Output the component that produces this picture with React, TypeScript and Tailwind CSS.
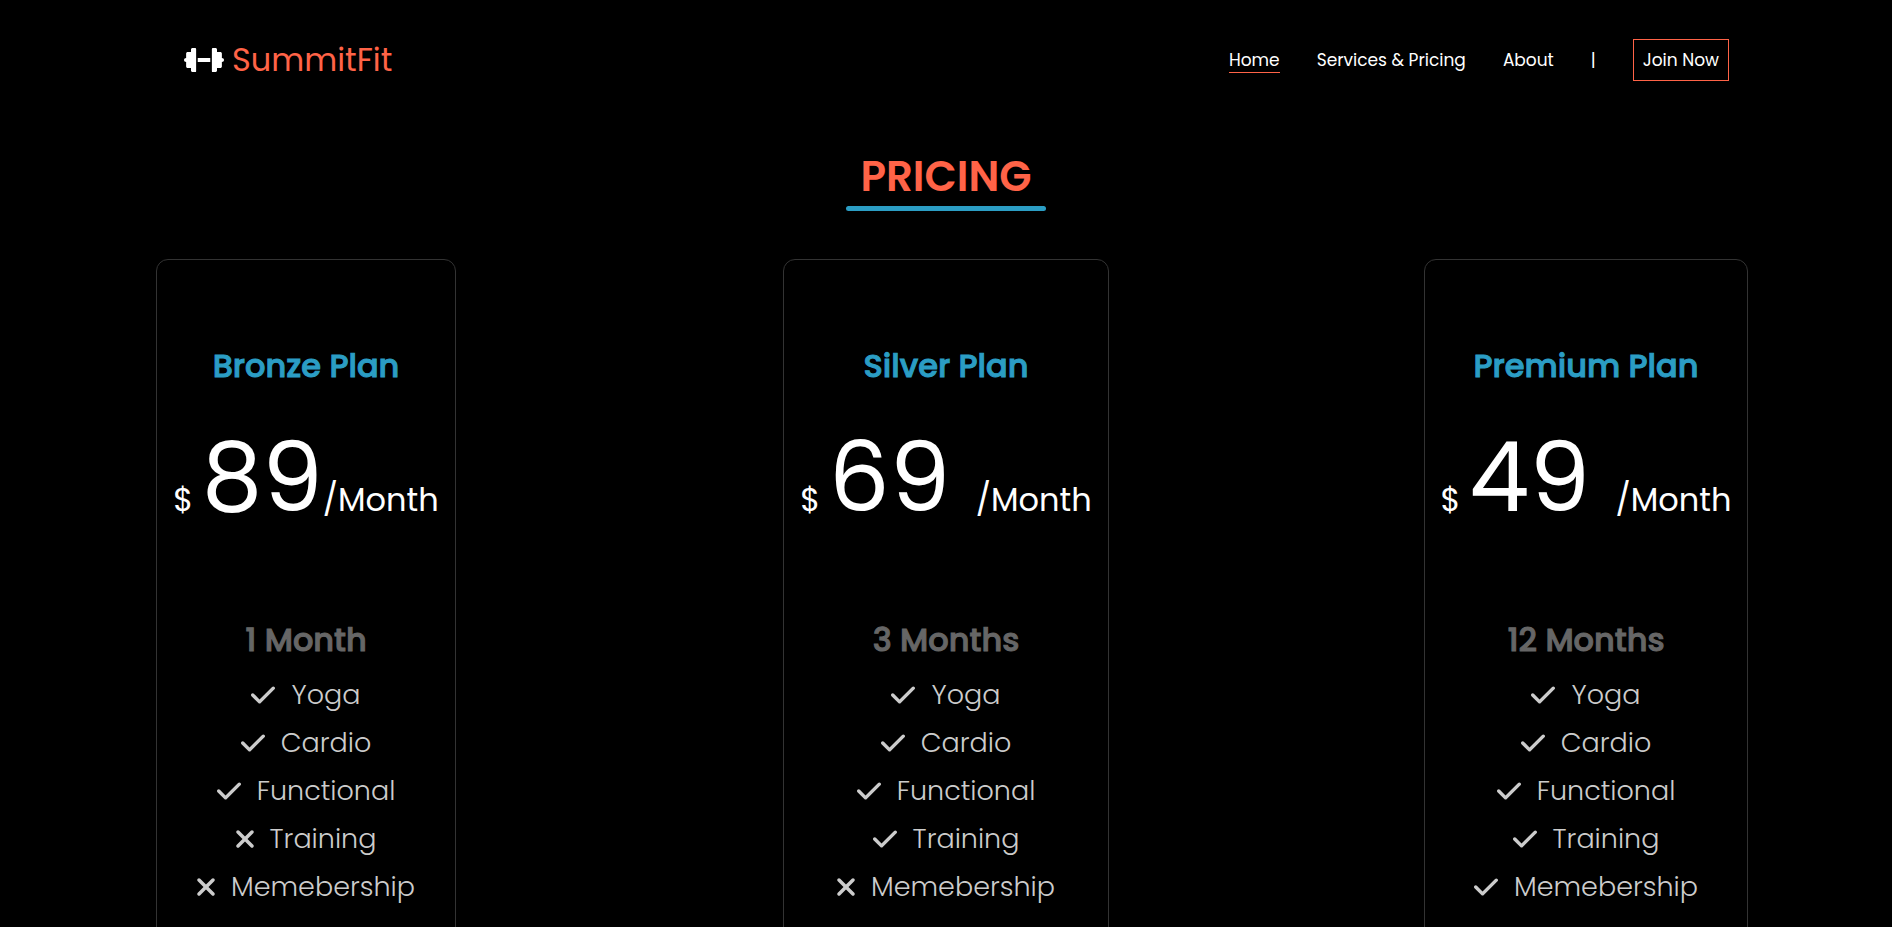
type Feature = { name: string; included: boolean };
type Plan = {
  name: string;
  price: string;
  duration: string;
  features: Feature[];
};

const featureNames = ["Yoga", "Cardio", "Functional", "Training", "Memebership"];

const featuresUpTo = (count: number): Feature[] =>
  featureNames.map((name, index) => ({ name, included: index < count }));

const plans: Plan[] = [
  { name: "Bronze Plan", price: "89", duration: "1 Month", features: featuresUpTo(3) },
  { name: "Silver Plan", price: "69 ", duration: "3 Months", features: featuresUpTo(4) },
  { name: "Premium Plan", price: "49 ", duration: "12 Months", features: featuresUpTo(5) },
];

function CheckIcon() {
  return (
    <svg viewBox="0 0 448 512" className="mr-4 h-7 w-6 shrink-0" fill="currentColor" role="img" aria-label="Included">
      <path d="M438.6 105.4C451.1 117.9 451.1 138.1 438.6 150.6L182.6 406.6C170.1 419.1 149.9 419.1 137.4 406.6L9.372 278.6C-3.124 266.1-3.124 245.9 9.372 233.4C21.87 220.9 42.13 220.9 54.63 233.4L159.1 338.7L393.4 105.4C405.9 92.88 426.1 92.88 438.6 105.4H438.6z" />
    </svg>
  );
}

function CrossIcon() {
  return (
    <svg viewBox="0 0 320 512" className="mr-4 h-7 w-[18px] shrink-0" fill="currentColor" role="img" aria-label="Not included">
      <path d="M310.6 361.4c12.5 12.5 12.5 32.75 0 45.25C304.4 412.9 296.2 416 288 416s-16.38-3.125-22.62-9.375L160 301.3L54.63 406.6C48.38 412.9 40.19 416 32 416S15.63 412.9 9.375 406.6c-12.5-12.5-12.5-32.75 0-45.25l105.4-105.4L9.375 150.6c-12.5-12.5-12.5-32.75 0-45.25s32.75-12.5 45.25 0L160 210.8l105.4-105.4c12.5-12.5 32.75-12.5 45.25 0s12.5 32.75 0 45.25l-105.4 105.4L310.6 361.4z" />
    </svg>
  );
}

function DumbbellIcon() {
  return (
    <svg viewBox="0 0 640 512" className="h-8 w-10" fill="currentColor" aria-hidden="true">
      <path d="M136 64h44c8 0 14 6 14 14v356c0 8-6 14-14 14h-44c-13 0-24-11-24-24v-40H58c-13 0-24-11-24-24v-72c-20 0-34-14-34-32s14-32 34-32v-72c0-13 11-24 24-24h54V88c0-13 11-24 24-24zM504 64h-44c-8 0-14 6-14 14v356c0 8 6 14 14 14h44c13 0 24-11 24-24v-40h54c13 0 24-11 24-24v-72c20 0 34-14 34-32s-14-32-34-32v-72c0-13-11-24-24-24h-54V88c0-13-11-24-24-24zM220 224h200v64H220z" />
    </svg>
  );
}

function PlanCard({ plan }: { plan: Plan }) {
  return (
    <article className="rounded-xl border border-[#333] px-4 pt-[82px] pb-20 text-center">
      <h2 className="text-[32px] leading-[48px] font-medium text-[#2b9dc4] [-webkit-text-stroke:1px]">{plan.name}</h2>
      <p className="mt-4 text-[32px] leading-[144px] whitespace-pre text-white">
        {"$ "}
        <span className="text-[96px]">{plan.price}</span>
        {"/Month"}
      </p>
      <h3 className="mt-11 text-[32px] leading-[48px] font-medium text-[#666] [-webkit-text-stroke:1px]">{plan.duration}</h3>
      <ul className="mt-[7px] text-[27px] leading-[48px] font-light text-[#ccc]">
        {plan.features.map((feature) => (
          <li key={feature.name} className="flex items-center justify-center">
            {feature.included ? <CheckIcon /> : <CrossIcon />}
            {feature.name}
          </li>
        ))}
      </ul>
    </article>
  );
}

export default function App() {
  return (
    <div className="h-screen overflow-hidden bg-black font-[Poppins,Inter,sans-serif] text-white">
      <header className="flex h-[120px] items-center justify-between pr-[163px] pl-[184px]">
        <a href="#" className="flex items-center gap-2 text-[32px] leading-[48px]">
          <DumbbellIcon />
          <span className="text-[#ff6347]">SummitFit</span>
        </a>
        <nav className="flex items-center gap-[37px] text-[17px] leading-6">
          <a href="#home" className="border-b border-[#ff6347]">Home</a>
          <a href="#pricing">Services &amp; Pricing</a>
          <a href="#about">About</a>
          <span aria-hidden="true">|</span>
          <a href="#join" className="border border-[#ff6347] px-[9px] py-2">Join Now</a>
        </nav>
      </header>
      <main>
        <div className="flex flex-col items-center pt-7">
          <h1 className="text-[42px] leading-[58px] font-semibold text-[#ff6347]">PRICING</h1>
          <div className="h-[5px] w-[200px] rounded-full bg-[#2b9dc4]" />
        </div>
        <section className="mt-12 grid grid-cols-3 items-start justify-items-center gap-x-7">
          {plans.map((plan) => (
            <PlanCard key={plan.name} plan={plan} />
          ))}
        </section>
      </main>
    </div>
  );
}
